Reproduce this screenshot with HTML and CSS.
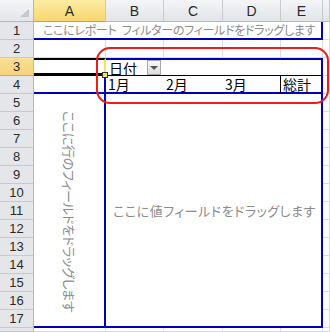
FILE: index.html
```html
<!DOCTYPE html>
<html lang="ja">
<head>
    <meta charset="UTF-8">
    <meta name="viewport" content="width=device-width, initial-scale=1.0">
    <title>ピボットテーブル</title>
    <link rel="stylesheet" href="styles.css">
</head>
<body>
    <div class="sheet">
        <!-- Column headers -->
        <div class="corner"><span class="corner-tri"></span></div>
        <div class="col-hd col-hd-sel">A</div>
        <div class="col-hd">B</div>
        <div class="col-hd">C</div>
        <div class="col-hd">D</div>
        <div class="col-hd">E</div>
        <div class="col-hd"></div>

        <!-- Row 1: report filter area -->
        <div class="row-hd">1</div>
        <div class="pv-filter">ここにレポート フィルターのフィールドをドラッグします</div>
        <div class="cell"></div>

        <!-- Row 2 -->
        <div class="row-hd">2</div>
        <div class="cell"></div>
        <div class="cell"></div>
        <div class="cell"></div>
        <div class="cell"></div>
        <div class="cell"></div>
        <div class="cell"></div>

        <!-- Row 3: column field -->
        <div class="row-hd row-hd-sel">3</div>
        <div class="cell-active"><span class="fill-handle"></span></div>
        <div class="pv-colfield">
            <span>日付</span>
            <span class="dd-btn"><span class="dd-arrow"></span></span>
        </div>
        <div class="cell"></div>

        <!-- Row 4: column labels -->
        <div class="row-hd">4</div>
        <div class="pv-corner"></div>
        <div class="pv-label">1月</div>
        <div class="pv-label">2月</div>
        <div class="pv-label pv-label-last">3月</div>
        <div class="pv-label pv-total">総計</div>
        <div class="cell"></div>

        <!-- Rows 5-17: row area and value area -->
        <div class="row-hd">5</div>
        <div class="pv-rows"><span class="vtext">ここに行のフィールドをドラッグします</span></div>
        <div class="pv-values">ここに値フィールドをドラッグします</div>
        <div class="cell"></div>
        <div class="row-hd">6</div><div class="cell"></div>
        <div class="row-hd">7</div><div class="cell"></div>
        <div class="row-hd">8</div><div class="cell"></div>
        <div class="row-hd">9</div><div class="cell"></div>
        <div class="row-hd">10</div><div class="cell"></div>
        <div class="row-hd">11</div><div class="cell"></div>
        <div class="row-hd">12</div><div class="cell"></div>
        <div class="row-hd">13</div><div class="cell"></div>
        <div class="row-hd">14</div><div class="cell"></div>
        <div class="row-hd">15</div><div class="cell"></div>
        <div class="row-hd">16</div><div class="cell"></div>
        <div class="row-hd">17</div><div class="cell"></div>

        <!-- Row 18 (cut off at the bottom edge) -->
        <div class="row-hd"></div>
        <div class="cell"></div>
        <div class="cell"></div>
        <div class="cell"></div>
        <div class="cell"></div>
        <div class="cell"></div>
        <div class="cell"></div>

        <!-- Red callout around the column area -->
        <div class="callout"></div>
    </div>
</body>
</html>
```

FILE: styles.css
```css
/* General */
* {
    box-sizing: border-box;
}

body {
    margin: 0;
    padding: 0;
    background-color: #fff;
    font-family: "Noto Sans CJK JP", "Liberation Sans", sans-serif;
    color: #000;
    line-height: 1;
}

/* Sheet grid */
.sheet {
    position: relative;
    display: grid;
    grid-template-columns: 34px 72px 58px 59px 58px 42px 1fr;
    grid-template-rows: 22px repeat(17, 18px) 1fr;
    width: 330px;
    height: 332px;
    overflow: hidden;
}

.cell {
    border-right: 1px solid #dadcdf;
    border-bottom: 1px solid #dadcdf;
}

/* Headers */
.corner {
    position: relative;
    background: linear-gradient(#f4f5f7, #e3e6ea);
    border-right: 1px solid #b4b9bf;
    border-bottom: 1px solid #b4b9bf;
}

.corner-tri {
    position: absolute;
    right: 4px;
    bottom: 4px;
    width: 0;
    height: 0;
    border-left: 9px solid transparent;
    border-bottom: 8px solid #c4c8cd;
}

.col-hd {
    display: flex;
    align-items: center;
    justify-content: center;
    background: linear-gradient(#f4f5f7, #e1e4e8);
    border-right: 1px solid #c6cacf;
    border-bottom: 1px solid #b4b9bf;
    font-family: "Liberation Sans", sans-serif;
    font-size: 14px;
    color: #2a2a2a;
}

.col-hd-sel {
    background: linear-gradient(#fdeda4, #f9d56e);
    border-bottom-color: #c2a14a;
}

.row-hd {
    display: flex;
    align-items: center;
    justify-content: center;
    background-color: #e4e6ea;
    border-right: 1px solid #b4b9bf;
    border-bottom: 1px solid #c6cacf;
    font-family: "Liberation Sans", sans-serif;
    font-size: 13px;
    color: #2a2a2a;
}

.row-hd-sel {
    background: linear-gradient(#f9df97, #f8d27a);
    border-bottom-color: #c9ad64;
}

/* Active cell A3 */
.cell-active {
    position: relative;
    border-top: 2px solid #000;
    border-bottom: 3px solid #000;
    border-right: 2px solid #f3e654;
}

.fill-handle {
    position: absolute;
    right: -4px;
    bottom: -5px;
    width: 6px;
    height: 6px;
    background-color: #f3e654;
    border: 1px solid #333;
}

/* Pivot table zones */
.pv-filter {
    grid-column: span 5;
    display: flex;
    align-items: center;
    padding-left: 9px;
    border-right: 2px solid #0000bc;
    border-bottom: 2px solid #0000bc;
    font-size: 12px;
    letter-spacing: -0.3px;
    word-spacing: 3px;
    font-feature-settings: "palt";
    color: #8c8c8c;
    white-space: nowrap;
    overflow: hidden;
}

.pv-colfield {
    grid-column: span 4;
    display: flex;
    align-items: center;
    padding-left: 3px;
    border-top: 2px solid #0000bc;
    border-right: 2px solid #0000bc;
    border-bottom: 1px solid #000;
    font-size: 14px;
}

.dd-btn {
    display: flex;
    align-items: center;
    justify-content: center;
    width: 14px;
    height: 15px;
    margin-left: 10px;
    background: linear-gradient(#f7f7f7, #dedede);
    border: 1px solid #a6a6a6;
}

.dd-arrow {
    width: 0;
    height: 0;
    border-left: 4px solid transparent;
    border-right: 4px solid transparent;
    border-top: 4px solid #555;
}

.pv-corner {
    border-right: 2px solid #0000bc;
    border-bottom: 2px solid #0000bc;
}

.pv-label {
    display: flex;
    align-items: center;
    padding-left: 2px;
    border-bottom: 2px solid #0000bc;
    font-size: 14px;
}

.pv-label-last {
    border-right: 1px solid #000;
}

.pv-total {
    border-right: 2px solid #0000bc;
}

.pv-rows {
    grid-row: span 13;
    display: flex;
    align-items: center;
    justify-content: center;
    padding-top: 4px;
    border-right: 2px solid #0000bc;
    border-bottom: 2px solid #0000bc;
}

.vtext {
    writing-mode: vertical-rl;
    text-orientation: sideways;
    font-size: 13px;
    letter-spacing: -0.3px;
    font-feature-settings: "palt";
    color: #8c8c8c;
    white-space: nowrap;
}

.pv-values {
    grid-column: span 4;
    grid-row: span 13;
    display: flex;
    align-items: center;
    justify-content: center;
    padding-left: 2px;
    border-right: 2px solid #0000bc;
    border-bottom: 2px solid #0000bc;
    font-size: 13px;
    letter-spacing: 0.5px;
    font-feature-settings: "palt";
    color: #8c8c8c;
    white-space: nowrap;
}

/* Annotation */
.callout {
    position: absolute;
    left: 96px;
    top: 47px;
    width: 233px;
    height: 57px;
    border: 2px solid #ee1c1c;
    border-radius: 14px;
}
```
